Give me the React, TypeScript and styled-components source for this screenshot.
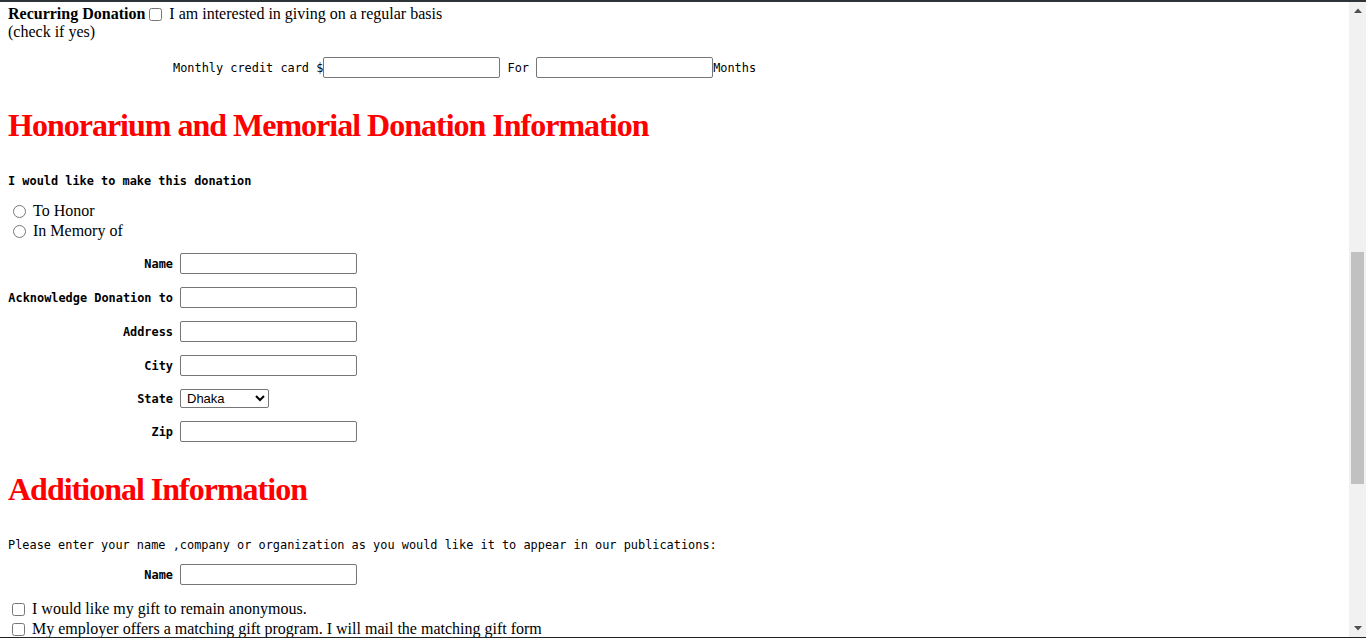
import React from "react";
import styled, { createGlobalStyle } from "styled-components";

const GlobalStyle = createGlobalStyle`
  html, body { margin: 0; padding: 0; background: #ffffff; overflow: hidden; }
  body { font-family: "Liberation Serif", "Times New Roman", serif; color: #000; }
`;

const Frame = styled.div`
  width: 1366px;
  height: 638px;
  display: flex;
  flex-direction: column;
  border-top: 2px solid #2e3338;
  border-bottom: 1px solid #1f2326;
  box-sizing: border-box;
  overflow: hidden;
`;

const Viewport = styled.div`
  flex: 1;
  display: flex;
  min-height: 0;
`;

const Content = styled.main`
  flex: 1;
  min-width: 0;
  overflow: hidden;
  padding: 3px 8px 0 8px;
  display: flex;
  flex-direction: column;
`;

const SerifLine = styled.div`
  font-size: 16px;
  line-height: 18px;
  height: 18px;
  display: flex;
  align-items: center;
  white-space: nowrap;
`;

const Strong = styled.b`
  font-weight: bold;
`;

const Check = styled.input.attrs({ type: "checkbox" })<{ $ml?: number }>`
  width: 13px;
  height: 13px;
  margin: 0 3px 0 ${(p) => p.$ml ?? 4}px;
  flex: none;
`;

const Radio = styled.input.attrs({ type: "radio" })`
  width: 13px;
  height: 13px;
  margin: 0 3px 0 5px;
  flex: none;
`;

const Spaced = styled.span`
  margin-left: 4px;
`;

const Mono = styled.span<{ $bold?: boolean }>`
  font-family: "DejaVu Sans Mono", "Liberation Mono", monospace;
  font-size: 11.9px;
  font-weight: ${(p) => (p.$bold ? "bold" : "normal")};
  white-space: pre;
`;

const MonthlyRow = styled.div`
  margin-top: 16px;
  height: 21px;
  display: flex;
  align-items: baseline;
  padding-left: 165px;
`;

const TextInput = styled.input.attrs({ type: "text" })`
  width: 177px;
  height: 21px;
  box-sizing: border-box;
  border: 1px solid #767676;
  border-radius: 2px;
  padding: 1px 2px;
  margin: 0;
  font-family: Arial, "Liberation Sans", sans-serif;
  font-size: 13px;
  background: #fff;
  flex: none;
`;

const Heading = styled.h1<{ $top: number }>`
  margin: ${(p) => p.$top}px 0 0 0;
  font-family: "Liberation Serif", "Times New Roman", serif;
  font-size: 32px;
  line-height: 36px;
  letter-spacing: -1px;
  font-weight: bold;
  color: #ff0000;
  white-space: nowrap;
`;

const Note = styled.div<{ $top: number }>`
  margin-top: ${(p) => p.$top}px;
  height: 14px;
  line-height: 14px;
  display: flex;
  align-items: center;
`;

const OptionList = styled.div<{ $top: number }>`
  margin-top: ${(p) => p.$top}px;
  display: flex;
  flex-direction: column;
`;

const OptionRow = styled.label`
  height: 20px;
  display: flex;
  align-items: center;
  font-size: 16px;
  white-space: nowrap;
`;

const FieldGrid = styled.div<{ $top: number }>`
  margin-top: ${(p) => p.$top}px;
  display: grid;
  grid-template-columns: 165px auto;
  column-gap: 7px;
  row-gap: 13px;
  align-items: center;
  justify-items: start;
`;

const FieldLabel = styled.label`
  justify-self: end;
  font-family: "DejaVu Sans Mono", "Liberation Mono", monospace;
  font-size: 11.9px;
  font-weight: bold;
  white-space: pre;
`;

const Select = styled.select`
  width: 89px;
  height: 19px;
  box-sizing: border-box;
  border: 1px solid #767676;
  border-radius: 2px;
  margin: 0;
  padding: 0 0 0 2px;
  font-family: Arial, "Liberation Sans", sans-serif;
  font-size: 13px;
  background: #fff;
  color: #000;
`;

const Scrollbar = styled.div`
  width: 17px;
  flex: none;
  background: #f1f1f1;
  display: flex;
  flex-direction: column;
`;

const ScrollButton = styled.div`
  height: 17px;
  flex: none;
  display: flex;
  align-items: center;
  justify-content: center;
`;

const Track = styled.div`
  flex: 1;
  padding: 0 2px;
`;

const Thumb = styled.div`
  margin-top: 233px;
  height: 232px;
  background: #c1c1c1;
`;

const states = ["Dhaka", "Chittagong", "Khulna", "Rajshahi", "Sylhet", "Barisal", "Rangpur"];

export default function App() {
  return (
    <>
      <GlobalStyle />
      <Frame>
        <Viewport>
          <Content>
            <SerifLine>
              <Strong>Recurring Donation</Strong>
              <Check />
              <Spaced>I am interested in giving on a regular basis</Spaced>
            </SerifLine>
            <SerifLine>(check if yes)</SerifLine>

            <MonthlyRow>
              <Mono>Monthly credit card $</Mono>
              <TextInput />
              <Mono> For </Mono>
              <TextInput />
              <Mono>Months</Mono>
            </MonthlyRow>

            <Heading $top={29}>Honorarium and Memorial Donation Information</Heading>

            <Note $top={31}>
              <Mono $bold>I would like to make this donation</Mono>
            </Note>

            <OptionList $top={13}>
              <OptionRow>
                <Radio name="type" />
                <Spaced>To Honor</Spaced>
              </OptionRow>
              <OptionRow>
                <Radio name="type" />
                <Spaced>In Memory of</Spaced>
              </OptionRow>
            </OptionList>

            <FieldGrid $top={12}>
              <FieldLabel>Name</FieldLabel>
              <TextInput />
              <FieldLabel>Acknowledge Donation to</FieldLabel>
              <TextInput />
              <FieldLabel>Address</FieldLabel>
              <TextInput />
              <FieldLabel>City</FieldLabel>
              <TextInput />
              <FieldLabel>State</FieldLabel>
              <Select defaultValue="Dhaka">
                {states.map((s) => (
                  <option key={s} value={s}>
                    {s}
                  </option>
                ))}
              </Select>
              <FieldLabel>Zip</FieldLabel>
              <TextInput />
            </FieldGrid>

            <Heading $top={29}>Additional Information</Heading>

            <Note $top={31}>
              <Mono>Please enter your name ,company or organization as you would like it to appear in our publications:</Mono>
            </Note>

            <FieldGrid $top={12}>
              <FieldLabel>Name</FieldLabel>
              <TextInput />
            </FieldGrid>

            <OptionList $top={14}>
              <OptionRow>
                <Check $ml={4} />
                <Spaced>I would like my gift to remain anonymous.</Spaced>
              </OptionRow>
              <OptionRow>
                <Check $ml={4} />
                <Spaced>My employer offers a matching gift program. I will mail the matching gift form</Spaced>
              </OptionRow>
            </OptionList>
          </Content>

          <Scrollbar>
            <ScrollButton>
              <svg width="8" height="5" viewBox="0 0 8 5">
                <polygon points="0,5 4,0.5 8,5" fill="#505050" />
              </svg>
            </ScrollButton>
            <Track>
              <Thumb />
            </Track>
            <ScrollButton>
              <svg width="8" height="5" viewBox="0 0 8 5">
                <polygon points="0,0 8,0 4,4.5" fill="#505050" />
              </svg>
            </ScrollButton>
          </Scrollbar>
        </Viewport>
      </Frame>
    </>
  );
}
